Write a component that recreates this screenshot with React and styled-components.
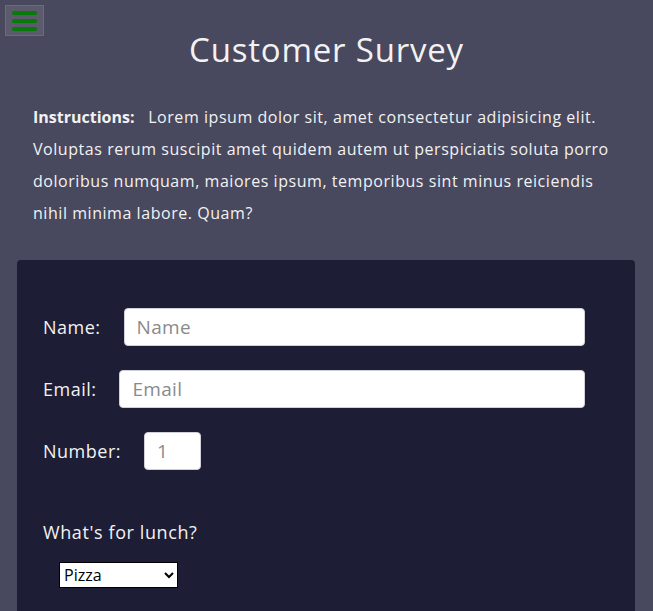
import React from 'react';
import styled, { createGlobalStyle } from 'styled-components';

const GlobalStyle = createGlobalStyle`
	body {
		margin: 0;
		background-color: #48485e;
		font-family: "Open Sans", "Liberation Sans", sans-serif;
		color: #f2f2f2;
	}
`;

const MenuButton = styled.button`
	position: absolute;
	top: 5px;
	left: 5px;
	width: 39px;
	height: 31px;
	padding: 0;
	background-color: #5b5b6c;
	border: 1px solid #6a6a7a;
	display: flex;
	flex-direction: column;
	align-items: center;
	justify-content: center;
	gap: 4px;
	cursor: pointer;
`;

const Bar = styled.span`
	display: block;
	width: 25px;
	height: 4px;
	border-radius: 2px;
	background-color: #087a0a;
`;

const Title = styled.h1`
	margin: 26px 0 27px;
	font-size: 33px;
	font-weight: 400;
	letter-spacing: 0.8px;
	line-height: 48px;
	text-align: center;
`;

const Instructions = styled.p`
	margin: 0 33px 31px;
	font-size: 16px;
	letter-spacing: 0.55px;
	line-height: 32px;
	max-width: 588px;
`;

const Lead = styled.strong`
	letter-spacing: 0;
	margin-right: 9px;
`;

const Card = styled.main`
	margin: 0 18px 0 17px;
	padding: 48px 50px 40px 26px;
	background-color: #1d1d35;
	border-radius: 4px;
	min-height: 320px;
`;

const Row = styled.div`
	display: flex;
	align-items: center;
	margin-bottom: 24px;
`;

const Label = styled.label`
	font-size: 18px;
	letter-spacing: 0.5px;
	margin-right: 23px;
`;

const Input = styled.input`
	flex: ${props => props.$short ? '0 0 auto' : '1'};
	width: ${props => props.$short ? '57px' : 'auto'};
	height: 38px;
	box-sizing: border-box;
	padding: 0 12px;
	border: 1px solid #d0d0d8;
	border-radius: 4px;
	font-family: inherit;
	font-size: 19px;
	letter-spacing: 0.3px;
	color: #333;

	&::placeholder {
		color: #8a8a8a;
	}
`;

const Question = styled.p`
	margin: 50px 0 18px;
	font-size: 18px;
	letter-spacing: 0.6px;
`;

const Select = styled.select`
	margin-left: 16px;
	width: 119px;
	height: 26px;
	font-family: inherit;
	font-size: 16px;
	border: 1px solid #000;
	border-radius: 0;
	background: #fff;
`;

export default function App() {
	return (
		<>
			<GlobalStyle />
			<MenuButton aria-label="menu">
				<Bar />
				<Bar />
				<Bar />
			</MenuButton>
			<Title>Customer Survey</Title>
			<Instructions>
				<Lead>Instructions:</Lead> Lorem ipsum dolor sit, amet consectetur adipisicing elit. Voluptas rerum suscipit amet quidem autem ut perspiciatis soluta porro doloribus numquam, maiores ipsum, temporibus sint minus reiciendis nihil minima labore. Quam?
			</Instructions>
			<Card>
				<Row>
					<Label htmlFor="name">Name:</Label>
					<Input id="name" type="text" placeholder="Name" />
				</Row>
				<Row>
					<Label htmlFor="email">Email:</Label>
					<Input id="email" type="email" placeholder="Email" />
				</Row>
				<Row>
					<Label htmlFor="number">Number:</Label>
					<Input id="number" type="number" placeholder="1" $short />
				</Row>
				<Question>What's for lunch?</Question>
				<Select defaultValue="pizza">
					<option value="pizza">Pizza</option>
					<option value="burger">Burger</option>
					<option value="salad">Salad</option>
				</Select>
			</Card>
		</>
	);
}
